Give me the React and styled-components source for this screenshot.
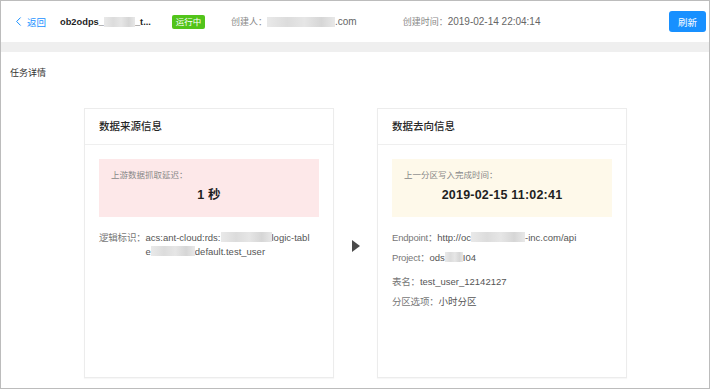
import React from "react";
import styled, { createGlobalStyle } from "styled-components";
import { ChevronLeft } from "lucide-react";

const GlobalStyle = createGlobalStyle`
    html, body {
        margin: 0;
        padding: 0;
        background: #fff;
    }
    * {
        box-sizing: border-box;
    }
`

const Frame = styled.div`
    width: 710px;
    height: 389px;
    border: 1px solid #bcbcbc;
    display: flex;
    flex-direction: column;
    font-family: "Helvetica Neue", "Liberation Sans", "Noto Sans CJK SC", sans-serif;
    font-size: 9.5px;
    color: #555;
    background: #fff;
    overflow: hidden;
`

const Header = styled.header`
    height: 41px;
    display: flex;
    align-items: center;
    padding: 0 3px 0 10px;
    flex-shrink: 0;
`

const BackLink = styled.a`
    display: flex;
    align-items: center;
    gap: 1px;
    color: #1890ff;
    font-size: 9.5px;
    cursor: pointer;
    margin-right: 14px;
`

const Title = styled.span`
    font-weight: 700;
    color: #1f1f1f;
    font-size: 9.3px;
    margin-right: 21px;
    white-space: nowrap;
    display: flex;
    align-items: center;
`

const Tag = styled.span`
    background: #52c41a;
    color: #fff;
    font-size: 8.5px;
    width: 33px;
    height: 14px;
    line-height: 14px;
    text-align: center;
    border-radius: 2px;
    margin-right: 26px;
`

const Meta = styled.span`
    display: flex;
    align-items: center;
    color: #666;
    font-size: 10px;
    margin-right: ${p => p.$gap || 0}px;
    white-space: nowrap;
`

const MetaLabel = styled.span`
    color: #888;
    font-size: 9px;
`

const RefreshButton = styled.button`
    margin-left: auto;
    width: 37px;
    height: 21px;
    border: none;
    border-radius: 3px;
    background: #1890ff;
    color: #fff;
    font-family: inherit;
    font-size: 9.5px;
    padding: 0;
    cursor: pointer;
`

const Strip = styled.div`
    height: 10px;
    background: #efefef;
    flex-shrink: 0;
`

const Content = styled.main`
    flex: 1;
    display: flex;
    flex-direction: column;
    padding: 14px 0 10px;
`

const SectionTitle = styled.div`
    padding-left: 9px;
    line-height: 14px;
    color: #333;
    font-size: 9px;
`

const CardsRow = styled.div`
    flex: 1;
    display: flex;
    justify-content: center;
    margin-top: 28px;
    padding-left: 1px;
`

const Card = styled.section`
    width: 250px;
    border: 1px solid #ececec;
    box-shadow: 0 1px 1px rgba(0, 0, 0, 0.03);
    display: flex;
    flex-direction: column;
`

const CardHeader = styled.div`
    height: 36px;
    line-height: 35px;
    padding-left: 14px;
    border-bottom: 1px solid #efefef;
    color: #262626;
    font-size: 10.5px;
    font-weight: 500;
`

const CardBody = styled.div`
    padding: 14px 14px 0;
`

const Highlight = styled.div`
    height: 58px;
    padding: 10px 12px 0;
    background: ${p => p.$tone === "warn" ? "#fef9ea" : "#fde8e9"};
`

const HighlightLabel = styled.div`
    line-height: 12px;
    font-size: 8.5px;
    color: #888;
`

const HighlightValue = styled.div`
    margin-top: 5px;
    line-height: 18px;
    text-align: center;
    font-size: 12.5px;
    font-weight: 700;
    color: #1f1f1f;
    letter-spacing: 0.2px;
`

const InfoList = styled.div`
    margin-top: 14px;
`

const InfoRow = styled.div`
    display: flex;
    line-height: 14px;
    margin-top: ${p => p.$space || 0}px;
    color: #666;
    white-space: nowrap;
`

const InfoLabel = styled.span`
    color: #777;
    flex-shrink: 0;
    letter-spacing: -0.2px;
`

const InfoValue = styled.span`
    color: #555;
`

const Masked = styled.span`
    display: inline-block;
    width: ${p => p.$w}px;
    height: 10px;
    vertical-align: -1px;
    background: linear-gradient(90deg, #e9e9e9 0%, #dcdcdc 30%, #e6e6e6 55%, #d6d6d6 80%, #e8e8e8 100%);
    filter: blur(0.6px);
`

const ArrowColumn = styled.div`
    width: 43px;
    display: flex;
    justify-content: center;
    padding-top: 132px;
`

const Arrow = styled.span`
    width: 0;
    height: 0;
    border-top: 6.5px solid transparent;
    border-bottom: 6.5px solid transparent;
    border-left: 8px solid #4a4a4a;
`

const App = () => {
    return (
        <>
            <GlobalStyle />
            <Frame>
                <Header>
                    <BackLink>
                        <ChevronLeft size={15} strokeWidth={1.6} />
                        返回
                    </BackLink>
                    <Title>ob2odps_<Masked $w={31} />_t...</Title>
                    <Tag>运行中</Tag>
                    <Meta $gap={46}>
                        <MetaLabel>创建人：</MetaLabel>
                        <Masked $w={68} />.com
                    </Meta>
                    <Meta>
                        <MetaLabel>创建时间：</MetaLabel>
                        2019-02-14 22:04:14
                    </Meta>
                    <RefreshButton>刷新</RefreshButton>
                </Header>
                <Strip />
                <Content>
                    <SectionTitle>任务详情</SectionTitle>
                    <CardsRow>
                        <Card>
                            <CardHeader>数据来源信息</CardHeader>
                            <CardBody>
                                <Highlight>
                                    <HighlightLabel>上游数据抓取延迟：</HighlightLabel>
                                    <HighlightValue>1 秒</HighlightValue>
                                </Highlight>
                                <InfoList>
                                    <InfoRow>
                                        <InfoLabel>逻辑标识：</InfoLabel>
                                        <InfoValue>
                                            acs:ant-cloud:rds:<Masked $w={51} />logic-tabl
                                            <br />
                                            e<Masked $w={44} />default.test_user
                                        </InfoValue>
                                    </InfoRow>
                                </InfoList>
                            </CardBody>
                        </Card>
                        <ArrowColumn>
                            <Arrow />
                        </ArrowColumn>
                        <Card>
                            <CardHeader>数据去向信息</CardHeader>
                            <CardBody>
                                <Highlight $tone="warn">
                                    <HighlightLabel>上一分区写入完成时间：</HighlightLabel>
                                    <HighlightValue>2019-02-15 11:02:41</HighlightValue>
                                </Highlight>
                                <InfoList>
                                    <InfoRow>
                                        <InfoLabel>Endpoint：</InfoLabel>
                                        <InfoValue>http://oc<Masked $w={54} />-inc.com/api</InfoValue>
                                    </InfoRow>
                                    <InfoRow $space={6}>
                                        <InfoLabel>Project：</InfoLabel>
                                        <InfoValue>ods<Masked $w={18} />I04</InfoValue>
                                    </InfoRow>
                                    <InfoRow $space={10}>
                                        <InfoLabel>表名：</InfoLabel>
                                        <InfoValue>test_user_12142127</InfoValue>
                                    </InfoRow>
                                    <InfoRow $space={6}>
                                        <InfoLabel>分区选项：</InfoLabel>
                                        <InfoValue>小时分区</InfoValue>
                                    </InfoRow>
                                </InfoList>
                            </CardBody>
                        </Card>
                    </CardsRow>
                </Content>
            </Frame>
        </>
    );
};

export default App;
